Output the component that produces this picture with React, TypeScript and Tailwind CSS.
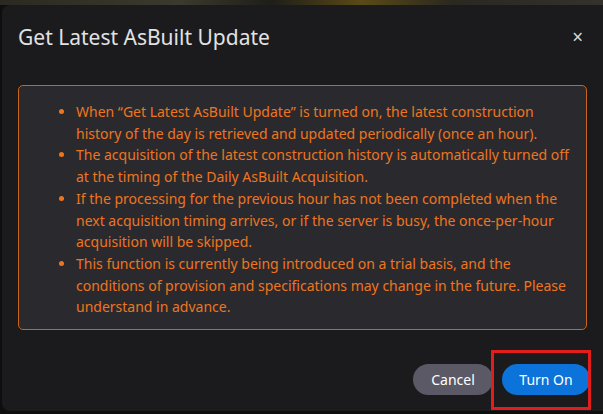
import React from "react";

const items = [
  "When \u201cGet Latest AsBuilt Update\u201d is turned on, the latest construction history of the day is retrieved and updated periodically (once an hour).",
  "The acquisition of the latest construction history is automatically turned off at the timing of the Daily AsBuilt Acquisition.",
  "If the processing for the previous hour has not been completed when the next acquisition timing arrives, or if the server is busy, the once-per-hour acquisition will be skipped.",
  "This function is currently being introduced on a trial basis, and the conditions of provision and specifications may change in the future. Please understand in advance.",
];

export default function App() {
  return (
    <div
      className="w-[603px] h-[414px] overflow-hidden bg-[#0e0e0f] relative"
      style={{ fontFamily: '"Noto Sans", "Open Sans", sans-serif' }}
    >
      <div className="h-[5px] bg-[linear-gradient(90deg,#2a2a22,#3b3a2c_30%,#1e1e1a_45%,#5a4a16_60%,#2a2820_75%,#33322b)]" />
      <div className="ml-[2px] w-[640px] h-[406px] rounded-lg bg-[#1b1b1d] flex flex-col">
        <div className="w-[601px] flex items-center justify-between pl-4 pr-[20px] h-[64px]">
          <h1 className="text-[21px] leading-[28px] text-[#e2e2e4]">Get Latest AsBuilt Update</h1>
          <span className="text-[#d8d8da] text-[19px] leading-none">×</span>
        </div>
        <div className="ml-4 mt-[16px] w-[569px] rounded-[5px] border border-[#c8641c] bg-[#2a2a2e] pl-[40px] pr-[10px] pt-[15px] pb-[11px]">
          <ul className="list-disc pl-[17px] text-[14px] leading-[21.7px] text-[#ee751f] marker:text-[#ee751f]">
            {items.map((t, i) => (
              <li key={i}>{t}</li>
            ))}
          </ul>
        </div>
        <div className="w-[601px] flex justify-end gap-[9px] pr-[13px] mt-[34px] relative">
          <button className="w-[80px] h-[31px] rounded-full bg-[#5b5966] text-white text-[14px]">Cancel</button>
          <button className="w-[88px] h-[31px] rounded-full bg-[#0b73d9] text-white text-[14px]">Turn On</button>
          <div className="absolute left-[489px] top-[-14px] w-[100px] h-[60px] border-[3px] border-[#e31c1c]" />
        </div>
      </div>
    </div>
  );
}
